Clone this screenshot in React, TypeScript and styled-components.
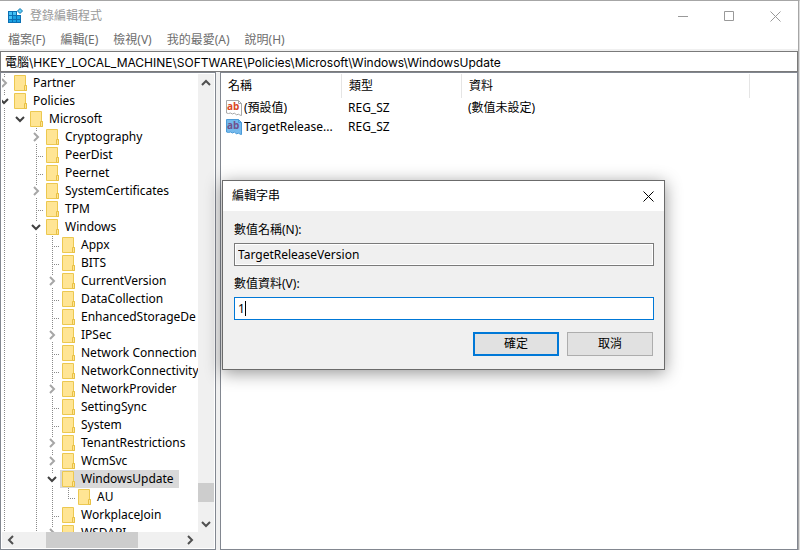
import React from "react";
import styled, { createGlobalStyle, css } from "styled-components";

const GlobalStyle = createGlobalStyle`
  *, *::before, *::after { box-sizing: border-box; }
  body { margin: 0; background: #fff; }
  body, button, input, table {
    font-family: "Noto Sans", "Noto Sans CJK TC", sans-serif;
    font-size: 12px;
    line-height: 18px;
    color: #000;
  }
`;

const Window = styled.div`
  position: relative;
  display: flex;
  flex-direction: column;
  height: 100vh;
  border-top: 1px solid #a6a6a6;
  border-right: 1px solid #dcdcdc;
  background: #fff;
  overflow: hidden;
`;

const Frame = styled.div`
  flex: 1;
  min-height: 0;
  display: flex;
  flex-direction: column;
  border-right: 1px solid #a6a6a6;
`;

const TitleBar = styled.header`
  display: flex;
  align-items: center;
  height: 30px;
  padding-left: 7px;
  gap: 7px;
`;

const Title = styled.h1`
  flex: 1;
  margin: 0;
  font-size: 12px;
  font-weight: 400;
  color: #999;
`;

const Captions = styled.div`
  display: flex;
`;

const CaptionButton = styled.button<{ $tone: string; $wide?: boolean }>`
  display: flex;
  align-items: center;
  justify-content: center;
  width: ${(p) => (p.$wide ? "46px" : "31px")};
  height: 30px;
  padding: 0;
  border: 0;
  background: none;
  color: ${(p) => p.$tone};
`;

const MenuBar = styled.nav`
  display: flex;
  gap: 15px;
  height: 18px;
  padding-left: 8px;
`;

const MenuItem = styled.button`
  padding: 0;
  border: 0;
  background: none;
  color: #6d6d6d;
`;

const AddressStrip = styled.div`
  padding-top: 2px;
  background: #f0f0f0;
`;

const AddressInput = styled.input`
  display: block;
  width: 100%;
  height: 21px;
  padding: 0 4px;
  border: 1px solid #7a7a7a;
  outline: 0;
  background: #fff;
  font-family: Inter, "Noto Sans CJK TC", sans-serif;
`;

const Panes = styled.main`
  flex: 1;
  min-height: 0;
  display: flex;
  gap: 4px;
  background: #f0f0f0;
`;

const TreePane = styled.section`
  flex: 0 0 216px;
  display: grid;
  grid-template-columns: 1fr 16px;
  grid-template-rows: 1fr 16px;
  padding: 1px;
  border: 1px solid #828790;
  background: #fff;
`;

const TreeScroller = styled.div`
  min-height: 0;
  overflow: hidden;
`;

const Tree = styled.ul`
  margin: 0 0 0 -6px;
  padding: 0;
  list-style: none;
`;

const Row = styled.li`
  display: flex;
  height: 18px;
  white-space: nowrap;
`;

type GuideKind = "blank" | "line" | "tee" | "elbow" | "open" | "closed" | "openLast";

const dotsDown = "repeating-linear-gradient(#8a8a8a 0 1px, transparent 1px 2px)";
const dotsAcross = "repeating-linear-gradient(90deg, #8a8a8a 0 1px, transparent 1px 2px)";

const Guide = styled.span<{ $kind: GuideKind }>`
  flex: 0 0 16px;
  display: flex;
  align-items: center;
  justify-content: center;
  background-repeat: no-repeat;
  ${(p) =>
    p.$kind === "line" &&
    css`
      background-image: ${dotsDown};
      background-size: 1px 18px;
      background-position: 8px 0;
    `}
  ${(p) =>
    (p.$kind === "tee" || p.$kind === "elbow") &&
    css`
      background-image: ${dotsDown}, ${dotsAcross};
      background-size: 1px ${p.$kind === "tee" ? "18px" : "10px"}, 8px 1px;
      background-position: 8px 0, 8px 10px;
    `}
  ${(p) =>
    (p.$kind === "open" || p.$kind === "closed") &&
    css`
      background-image: ${dotsDown}, ${dotsDown};
      background-size: 1px 3px, 1px 2px;
      background-position: 8px 0, 8px 16px;
    `}
`;

const Node = styled.span<{ $selected?: boolean }>`
  display: flex;
  align-items: center;
  gap: 6px;
  padding: 0 5px 0 2px;
  background: ${(p) => (p.$selected ? "#d9d9d9" : "transparent")};
`;

const ScrollBar = styled.div<{ $across?: boolean }>`
  display: flex;
  flex-direction: ${(p) => (p.$across ? "row" : "column")};
  background: #f0f0f0;
`;

const ScrollButton = styled.button`
  flex: 0 0 17px;
  display: flex;
  align-items: center;
  justify-content: center;
  padding: 0;
  border: 0;
  background: none;
`;

const Track = styled.div<{ $part: number }>`
  flex: ${(p) => p.$part} 1 0;
`;

const Thumb = styled.div<{ $part: number }>`
  flex: ${(p) => p.$part} 1 0;
  background: #cdcdcd;
`;

const Corner = styled.div`
  background: #f0f0f0;
`;

const ListPane = styled.section`
  flex: 1;
  min-width: 0;
  border: 1px solid #828790;
  background: #fff;
  overflow: hidden;
`;

const Values = styled.table`
  width: 100%;
  table-layout: fixed;
  border-collapse: collapse;
`;

const Col = styled.col<{ $w?: number }>`
  width: ${(p) => (p.$w ? p.$w + "px" : "auto")};
`;

const Head = styled.th`
  height: 25px;
  padding: 0 0 0 7px;
  font-weight: 400;
  text-align: left;
  background: linear-gradient(#e5e5e5, #e5e5e5) right 1px / 1px 24px no-repeat;
`;

const Filler = styled.td`
  padding: 0;
`;

const Cell = styled.td`
  height: 19px;
  padding: 0 6px;
  white-space: nowrap;
  &:first-child { padding-left: 5px; }
`;

const ValueName = styled.div`
  display: flex;
  align-items: center;
  gap: 2px;
  span { overflow: hidden; text-overflow: ellipsis; }
  svg { flex: none; }
`;

const Dialog = styled.div`
  position: absolute;
  left: 222px;
  top: 179px;
  width: 443px;
  border: 1px solid #6b6b6b;
  background: #f0f0f0;
  box-shadow: 0 3px 16px rgba(0, 0, 0, 0.42);
`;

const DialogTitle = styled.div`
  display: flex;
  align-items: center;
  justify-content: space-between;
  height: 30px;
  padding-left: 9px;
  background: #fff;
  h2 { margin: 0; font-size: 12px; font-weight: 400; }
`;

const Form = styled.form`
  display: flex;
  flex-direction: column;
  padding: 10px 10px 13px 11px;
`;

const Label = styled.label`
  height: 22px;
`;

const Field = styled.div`
  position: relative;
  margin-bottom: 9px;
`;

const TextBox = styled.input<{ $active?: boolean }>`
  display: block;
  width: 100%;
  height: 23px;
  padding: 0 3px;
  outline: 0;
  caret-color: transparent;
  border: 1px solid ${(p) => (p.$active ? "#0078d7" : "#7a7a7a")};
  background: ${(p) => (p.$active ? "#fff" : "#f0f0f0")};
  box-shadow: inset 0 0 0 1px #fff;
`;

const Caret = styled.span`
  position: absolute;
  left: 11px;
  top: 4px;
  width: 1px;
  height: 15px;
  background: #000;
`;

const Actions = styled.div`
  display: flex;
  justify-content: flex-end;
  gap: 8px;
  padding: 3px 1px 0 0;
`;

const PushButton = styled.button<{ $primary?: boolean }>`
  width: 86px;
  height: 24px;
  padding: 0;
  line-height: 20px;
  border: ${(p) => (p.$primary ? "2px solid #0078d7" : "1px solid #adadad")};
  background: #e1e1e1;
`;

function Chevron({ dir, color = "#505050" }: { dir: "up" | "down" | "left" | "right"; color?: string }) {
  const d = {
    up: "M1 7 5 3l4 4",
    down: "M1 3l4 4 4-4",
    left: "M7 1 3 5l4 4",
    right: "M3 1l4 4-4 4",
  }[dir];
  return (
    <svg width="10" height="10" viewBox="0 0 10 10" aria-hidden="true">
      <path d={d} fill="none" stroke={color} strokeWidth="2" />
    </svg>
  );
}

function FolderIcon() {
  return (
    <svg width="13" height="16" viewBox="0 0 13 16" aria-hidden="true">
      <path d="M.5.5h11v10h1v5H.5z" fill="#ffe594" stroke="#ecc850" />
      <path d="M10.5 15.5v-5h2v5z" fill="#ffe594" stroke="#e8c044" />
    </svg>
  );
}

function CloseIcon() {
  return (
    <svg width="11" height="11" viewBox="0 0 11 11" aria-hidden="true">
      <path d="m.5.5 10 10M10.5.5l-10 10" stroke="currentColor" fill="none" />
    </svg>
  );
}

function RegistryIcon() {
  return (
    <svg width="16" height="16" viewBox="0 0 16 16" aria-hidden="true">
      <path d="M1 3h9v4h4v8H1z" fill="#0b6fb3" />
      <path d="M2 4h3v3H2zM6 4h3v3H6zM2 8h3v3H2z" fill="#45c1f5" />
      <path d="M6 8h3v3H6zM10 8h3v3h-3zM2 12h3v2H2zM6 12h3v2H6zM10 12h3v2h-3z" fill="#1ba1e2" />
      <path d="m13 .5 2.5 2.5L13 5.500 10.500 3z" fill="#5ccbf7" stroke="#1579ae" />
    </svg>
  );
}

function StringIcon({ selected }: { selected?: boolean }) {
  const edge = selected ? "#4a9ad8" : "#a8a8a8";
  return (
    <svg width="16" height="16" viewBox="0 0 16 16" aria-hidden="true">
      <path
        d="M.5.5h12l3 3v12l-2-.5-1-1-2 1-2-2-2 1-2-1-2 .5-2-.5z"
        fill={selected ? "#74b9ec" : "#fff"}
        stroke={edge}
      />
      <path d="M12.500.5v3h3" fill="none" stroke={edge} />
      <text
        x="1"
        y="10"
        fontFamily="Open Sans, sans-serif"
        fontWeight="700"
        fontSize="10"
        fill={selected ? "#70508c" : "#d9481f"}
      >
        ab
      </text>
    </svg>
  );
}

function WindowButtons() {
  return (
    <Captions>
      <CaptionButton $tone="#999" $wide aria-label="最小化">
        <svg width="10" height="11" viewBox="0 0 10 11" aria-hidden="true">
          <path d="M0 5.500h10" stroke="currentColor" />
        </svg>
      </CaptionButton>
      <CaptionButton $tone="#999" $wide aria-label="最大化">
        <svg width="10" height="10" viewBox="0 0 10 10" aria-hidden="true">
          <path d="M.5.5h9v9h-9z" fill="none" stroke="currentColor" />
        </svg>
      </CaptionButton>
      <CaptionButton $tone="#999" $wide aria-label="關閉">
        <CloseIcon />
      </CaptionButton>
    </Captions>
  );
}

interface TreeItem {
  name: string;
  guides: GuideKind[];
  selected?: boolean;
}

const top: GuideKind[] = ["line", "blank"];
const sub: GuideKind[] = ["line", "blank", "line"];

const items: TreeItem[] = [
  { name: "Partner", guides: ["closed"] },
  { name: "Policies", guides: ["open"] },
  { name: "Microsoft", guides: ["line", "openLast"] },
  { name: "Cryptography", guides: [...top, "closed"] },
  { name: "PeerDist", guides: [...top, "tee"] },
  { name: "Peernet", guides: [...top, "tee"] },
  { name: "SystemCertificates", guides: [...top, "closed"] },
  { name: "TPM", guides: [...top, "tee"] },
  { name: "Windows", guides: [...top, "open"] },
  { name: "Appx", guides: [...sub, "tee"] },
  { name: "BITS", guides: [...sub, "tee"] },
  { name: "CurrentVersion", guides: [...sub, "closed"] },
  { name: "DataCollection", guides: [...sub, "tee"] },
  { name: "EnhancedStorageDe", guides: [...sub, "tee"] },
  { name: "IPSec", guides: [...sub, "closed"] },
  { name: "Network Connection", guides: [...sub, "tee"] },
  { name: "NetworkConnectivity", guides: [...sub, "tee"] },
  { name: "NetworkProvider", guides: [...sub, "closed"] },
  { name: "SettingSync", guides: [...sub, "tee"] },
  { name: "System", guides: [...sub, "tee"] },
  { name: "TenantRestrictions", guides: [...sub, "closed"] },
  { name: "WcmSvc", guides: [...sub, "closed"] },
  { name: "WindowsUpdate", guides: [...sub, "open"], selected: true },
  { name: "AU", guides: [...sub, "line", "elbow"] },
  { name: "WorkplaceJoin", guides: [...sub, "tee"] },
  { name: "WSDAPI", guides: [...sub, "closed"] },
];

const values = [
  { name: "(預設值)", type: "REG_SZ", data: "(數值未設定)", selected: false },
  { name: "TargetRelease...", type: "REG_SZ", data: "", selected: true },
];

export default function App() {
  return (
    <Window>
      <GlobalStyle />
      <Frame>
        <TitleBar>
          <RegistryIcon />
          <Title>登錄編輯程式</Title>
          <WindowButtons />
        </TitleBar>
        <MenuBar>
          {["檔案(F)", "編輯(E)", "檢視(V)", "我的最愛(A)", "說明(H)"].map((m) => (
            <MenuItem key={m}>{m}</MenuItem>
          ))}
        </MenuBar>
        <AddressStrip>
          <AddressInput
            aria-label="位址"
            defaultValue={"電腦\\HKEY_LOCAL_MACHINE\\SOFTWARE\\Policies\\Microsoft\\Windows\\WindowsUpdate"}
          />
        </AddressStrip>
        <Panes>
          <TreePane>
            <TreeScroller>
              <Tree role="tree">
                {items.map((item) => (
                  <Row key={item.name} role="treeitem" aria-selected={!!item.selected}>
                    {item.guides.map((kind, i) => (
                      <Guide key={i} $kind={kind}>
                        {kind === "closed" && <Chevron dir="right" color="#a6a6a6" />}
                        {(kind === "open" || kind === "openLast") && <Chevron dir="down" color="#404040" />}
                      </Guide>
                    ))}
                    <Node $selected={item.selected}>
                      <FolderIcon />
                      {item.name}
                    </Node>
                  </Row>
                ))}
              </Tree>
            </TreeScroller>
            <ScrollBar>
              <ScrollButton aria-label="向上捲動"><Chevron dir="up" /></ScrollButton>
              <Track $part={392} />
              <Thumb $part={19} />
              <Track $part={13} />
              <ScrollButton aria-label="向下捲動"><Chevron dir="down" /></ScrollButton>
            </ScrollBar>
            <ScrollBar $across>
              <ScrollButton aria-label="向左捲動"><Chevron dir="left" /></ScrollButton>
              <Track $part={27} />
              <Thumb $part={91} />
              <Track $part={43} />
              <ScrollButton aria-label="向右捲動"><Chevron dir="right" /></ScrollButton>
            </ScrollBar>
            <Corner />
          </TreePane>
          <ListPane>
            <Values>
              <colgroup>
                <Col $w={121} />
                <Col $w={120} />
                <Col $w={288} />
                <Col />
              </colgroup>
              <thead>
                <tr>
                  <Head>名稱</Head>
                  <Head>類型</Head>
                  <Head>資料</Head>
                  <Filler />
                </tr>
              </thead>
              <tbody>
                {values.map((v) => (
                  <tr key={v.name}>
                    <Cell>
                      <ValueName>
                        <StringIcon selected={v.selected} />
                        <span>{v.name}</span>
                      </ValueName>
                    </Cell>
                    <Cell>{v.type}</Cell>
                    <Cell>{v.data}</Cell>
                    <Filler />
                  </tr>
                ))}
              </tbody>
            </Values>
          </ListPane>
        </Panes>
      </Frame>
      <Dialog role="dialog" aria-labelledby="dialog-title">
        <DialogTitle>
          <h2 id="dialog-title">編輯字串</h2>
          <CaptionButton $tone="#000" aria-label="關閉"><CloseIcon /></CaptionButton>
        </DialogTitle>
        <Form onSubmit={(e) => e.preventDefault()}>
          <Label htmlFor="value-name">數值名稱(N):</Label>
          <Field>
            <TextBox id="value-name" readOnly value="TargetReleaseVersion" />
          </Field>
          <Label htmlFor="value-data">數值資料(V):</Label>
          <Field>
            <TextBox id="value-data" $active defaultValue="1" />
            <Caret />
          </Field>
          <Actions>
            <PushButton $primary type="submit">確定</PushButton>
            <PushButton type="button">取消</PushButton>
          </Actions>
        </Form>
      </Dialog>
    </Window>
  );
}
